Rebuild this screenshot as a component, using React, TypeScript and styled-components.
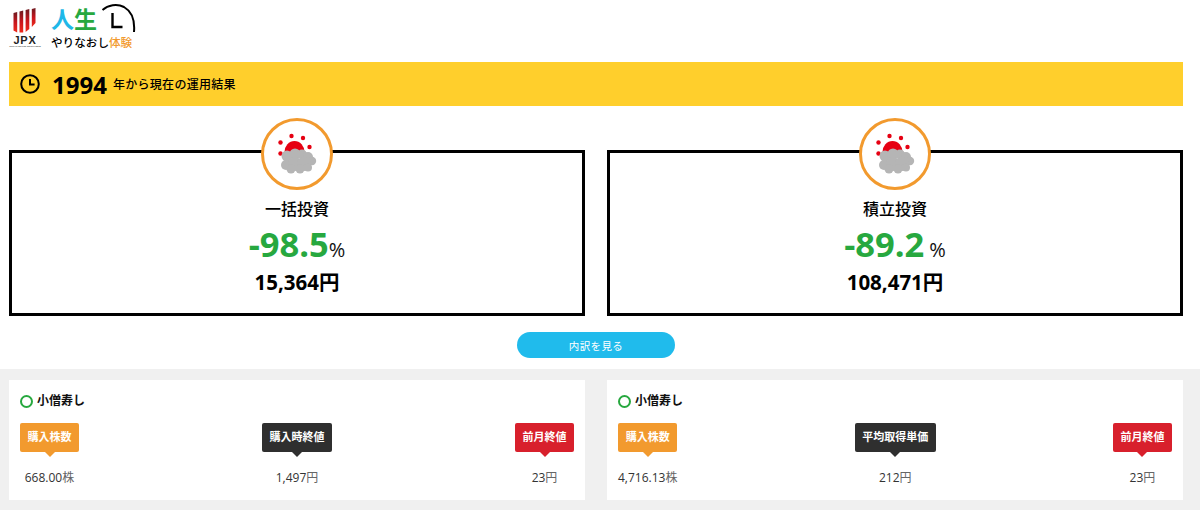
import { FC } from "react";
import styled, { createGlobalStyle } from "styled-components";

const GlobalStyle = createGlobalStyle`
  html, body {
    margin: 0;
    padding: 0;
    background: #fff;
    font-family: "Open Sans", "Noto Sans CJK JP", sans-serif;
    color: #000;
  }
`;

const Page = styled.div`
  width: 1200px;
  height: 510px;
  overflow: hidden;
  display: flex;
  flex-direction: column;
  & > * {
    flex-shrink: 0;
  }
`;

const Header = styled.header`
  height: 62px;
  padding: 8px 0 0 9px;
  box-sizing: border-box;
  display: flex;
  gap: 10px;
`;

const JpxLogo = styled.div`
  width: 32px;
  display: flex;
  flex-direction: column;
  align-items: center;
`;

const JpxText = styled.div`
  font-family: "Liberation Sans", sans-serif;
  font-weight: 700;
  font-size: 11px;
  line-height: 9px;
  letter-spacing: 0.8px;
  margin-top: 3px;
  color: #222;
`;

const JpxTagline = styled.div`
  font-family: "Liberation Sans", sans-serif;
  font-weight: 700;
  font-size: 2.4px;
  line-height: 4px;
  white-space: nowrap;
  color: #444;
`;

const LogoMain = styled.div`
  display: flex;
  flex-direction: column;
  position: relative;
`;

const LogoTitle = styled.div`
  display: flex;
  font-family: "Noto Sans CJK JP", sans-serif;
  font-weight: 700;
  font-size: 23px;
  line-height: 24px;
  height: 26px;
  margin-top: -2px;
  margin-bottom: 2px;
`;

const Blue = styled.span`
  color: #1fb8e8;
`;

const Green = styled.span`
  color: #27a83f;
`;

const LogoArc = styled.svg`
  position: absolute;
  left: 50px;
  top: -4px;
`;

const LogoSub = styled.div`
  font-family: "Noto Sans CJK JP", sans-serif;
  font-weight: 500;
  font-size: 11.6px;
  line-height: 14px;
  margin-top: 1px;
  white-space: nowrap;
`;

const Orange = styled.span`
  color: #f29a2e;
`;

const Banner = styled.div`
  margin: 0 17px 0 9px;
  height: 44px;
  background: #ffcf2c;
  display: flex;
  align-items: center;
  padding-left: 11px;
`;

const ClockSvg = styled.svg`
  margin-top: -1px;
`;

const BannerYear = styled.span`
  font-weight: 700;
  font-size: 24px;
  margin-left: 12px;
  line-height: 44px;
  position: relative;
  top: 1px;
`;

const BannerText = styled.span`
  font-size: 12px;
  font-weight: 500;
  letter-spacing: 0.3px;
  margin-left: 6px;
`;

const Results = styled.div`
  display: grid;
  grid-template-columns: 576px 576px;
  column-gap: 22px;
  margin: 44px 0 0 9px;
`;

const ResultCard = styled.div`
  position: relative;
  height: 166px;
  box-sizing: border-box;
  border: 3px solid #000;
  display: flex;
  flex-direction: column;
  align-items: center;
  padding-top: 45px;
`;

const WeatherBadge = styled.div`
  position: absolute;
  left: 50%;
  top: -35px;
  transform: translateX(-50%);
  width: 72px;
  height: 72px;
  box-sizing: border-box;
  border: 3px solid #f29a2e;
  border-radius: 50%;
  background: #fff;
  display: flex;
  align-items: center;
  justify-content: center;
`;

const CardTitle = styled.div`
  font-size: 16px;
  font-weight: 500;
  line-height: 22px;
`;

const Percent = styled.div`
  display: flex;
  align-items: baseline;
  margin-top: 4px;
  line-height: 40px;
`;

const PercentValue = styled.span`
  font-size: 34.5px;
  font-weight: 700;
  color: #27a83f;
`;

const PercentUnit = styled.span<{ $gap: number }>`
  font-size: 20px;
  margin-left: ${(p) => p.$gap}px;
  color: #111;
`;

const Amount = styled.div`
  font-size: 20.5px;
  font-weight: 700;
  line-height: 24px;
`;

const ButtonRow = styled.div`
  display: flex;
  justify-content: center;
  margin-top: 16px;
  height: 37px;
  padding-right: 8px;
`;

const DetailButton = styled.button`
  width: 158px;
  height: 26px;
  border: none;
  border-radius: 13px;
  background: #20bbec;
  color: #fff;
  font-family: inherit;
  font-size: 10.5px;
  letter-spacing: 0.4px;
  padding: 0;
`;

const Bottom = styled.div`
  flex: 1;
  background: #f0f0f0;
  padding: 11px 0 0 9px;
  display: grid;
  grid-template-columns: 576px 576px;
  column-gap: 22px;
  align-items: start;
`;

const StockCard = styled.div`
  height: 120px;
  background: #fff;
  box-sizing: border-box;
  padding: 13px 11px 0;
`;

const StockName = styled.div`
  display: flex;
  align-items: center;
  gap: 4px;
  font-size: 12px;
  font-weight: 600;
  line-height: 16px;
  color: #111;
`;

const Ring = styled.span`
  width: 13px;
  height: 13px;
  box-sizing: border-box;
  border: 2.4px solid #27a83f;
  border-radius: 50%;
`;

const Columns = styled.div`
  display: flex;
  justify-content: space-between;
  margin-top: 14px;
`;

const Column = styled.div`
  display: flex;
  flex-direction: column;
  align-items: center;
`;

const Tag = styled.div<{ $color: string }>`
  position: relative;
  height: 29px;
  padding: 0 7.5px;
  border-radius: 2px;
  background: ${(p) => p.$color};
  color: #fff;
  font-size: 11px;
  font-weight: 600;
  line-height: 28px;
  white-space: nowrap;

  &::after {
    content: "";
    position: absolute;
    left: 50%;
    bottom: -5px;
    margin-left: -5px;
    border-left: 5px solid transparent;
    border-right: 5px solid transparent;
    border-top: 5px solid ${(p) => p.$color};
  }
`;

const Value = styled.div`
  margin-top: 18px;
  font-size: 12px;
  line-height: 16px;
  color: #333;
`;

const Unit = styled.span`
  color: #666;
`;

const ClockIcon: FC = () => (
  <ClockSvg width="20" height="20" viewBox="0 0 20 20" fill="none" stroke="#000" strokeWidth="2">
    <circle cx="10" cy="10" r="8.8" />
    <path d="M10 5v5.6h4.6" />
  </ClockSvg>
);

const JpxMark: FC = () => (
  <svg width="24" height="25" viewBox="0 0 24 25">
    <defs>
      <linearGradient id="jpxRed" x1="0" y1="0" x2="0" y2="1">
        <stop offset="0" stopColor="#6e1a20" />
        <stop offset="0.5" stopColor="#c8161d" />
        <stop offset="1" stopColor="#ee2a1c" />
      </linearGradient>
    </defs>
    <path d="M0.5 5l3.7-1v20.5l-3.7-2z" fill="url(#jpxRed)" />
    <path d="M6.5 3.5l3.7-1v22l-3.7 0z" fill="url(#jpxRed)" />
    <path d="M12.6 2l3.7-1v20l-3.7 3z" fill="url(#jpxRed)" />
    <path d="M18.8 1l3.7-1v15l-3.7 4z" fill="url(#jpxRed)" />
  </svg>
);

const WeatherIcon: FC = () => (
  <svg width="40" height="42" viewBox="278 134 40 42">
    <path d="M285.5 153a10 11 0 0 1 20 0z" fill="#e60012" />
    <g fill="#e60012">
      <circle cx="292.5" cy="137" r="2.2" />
      <circle cx="304" cy="139" r="2.2" />
      <circle cx="310.5" cy="148" r="2.2" />
      <circle cx="281.5" cy="143.5" r="2.2" />
      <circle cx="281.5" cy="154.5" r="2.2" />
    </g>
    <g fill="#b5b5b5">
      <circle cx="288" cy="157" r="5.5" />
      <circle cx="296" cy="155" r="5.5" />
      <circle cx="303" cy="155.5" r="5" />
      <circle cx="309" cy="158" r="5" />
      <circle cx="313" cy="162" r="4.2" />
      <circle cx="287" cy="166" r="5" />
      <circle cx="296" cy="165" r="7" />
      <circle cx="305" cy="165" r="7" />
      <circle cx="292" cy="170" r="4.5" />
      <circle cx="301" cy="170" r="4.5" />
      <circle cx="309" cy="168.5" r="4" />
    </g>
  </svg>
);

type Stock = {
  middle: string;
  shares: string;
  middleValue: string;
};

type Result = {
  title: string;
  percent: string;
  gap: number;
  amount: string;
};

const results: Result[] = [
  { title: "一括投資", percent: "-98.5", gap: 0, amount: "15,364円" },
  { title: "積立投資", percent: "-89.2", gap: 5, amount: "108,471円" },
];

const stocks: Stock[] = [
  { middle: "購入時終値", shares: "668.00", middleValue: "1,497" },
  { middle: "平均取得単価", shares: "4,716.13", middleValue: "212" },
];

const App: FC = () => {
  return (
    <Page>
      <GlobalStyle />
      <Header>
        <JpxLogo>
          <JpxMark />
          <JpxText>JPX</JpxText>
          <JpxTagline>TOKYO STOCK EXCHANGE</JpxTagline>
        </JpxLogo>
        <LogoMain>
          <LogoTitle>
            <Blue>人</Blue>
            <Green>生</Green>
          </LogoTitle>
          <LogoArc width="36" height="30" viewBox="0 0 36 30" fill="none" stroke="#000">
            <path d="M1.5 6C7 1 16-0.5 23 3c7 4 11 13 10 25" strokeWidth="2" />
            <path d="M11.5 9v14h10" strokeWidth="2.4" />
          </LogoArc>
          <LogoSub>
            やりなおし<Orange>体験</Orange>
          </LogoSub>
        </LogoMain>
      </Header>
      <Banner>
        <ClockIcon />
        <BannerYear>1994</BannerYear>
        <BannerText>年から現在の運用結果</BannerText>
      </Banner>
      <Results>
        {results.map((r) => (
          <ResultCard key={r.title}>
            <WeatherBadge>
              <WeatherIcon />
            </WeatherBadge>
            <CardTitle>{r.title}</CardTitle>
            <Percent>
              <PercentValue>{r.percent}</PercentValue>
              <PercentUnit $gap={r.gap}>%</PercentUnit>
            </Percent>
            <Amount>{r.amount}</Amount>
          </ResultCard>
        ))}
      </Results>
      <ButtonRow>
        <DetailButton>内訳を見る</DetailButton>
      </ButtonRow>
      <Bottom>
        {stocks.map((s) => (
          <StockCard key={s.middle}>
            <StockName>
              <Ring />
              小僧寿し
            </StockName>
            <Columns>
              <Column>
                <Tag $color="#f29a2e">購入株数</Tag>
                <Value>
                  {s.shares}
                  <Unit>株</Unit>
                </Value>
              </Column>
              <Column>
                <Tag $color="#2f2f2f">{s.middle}</Tag>
                <Value>
                  {s.middleValue}
                  <Unit>円</Unit>
                </Value>
              </Column>
              <Column>
                <Tag $color="#d8202c">前月終値</Tag>
                <Value>
                  23<Unit>円</Unit>
                </Value>
              </Column>
            </Columns>
          </StockCard>
        ))}
      </Bottom>
    </Page>
  );
};

export default App;
